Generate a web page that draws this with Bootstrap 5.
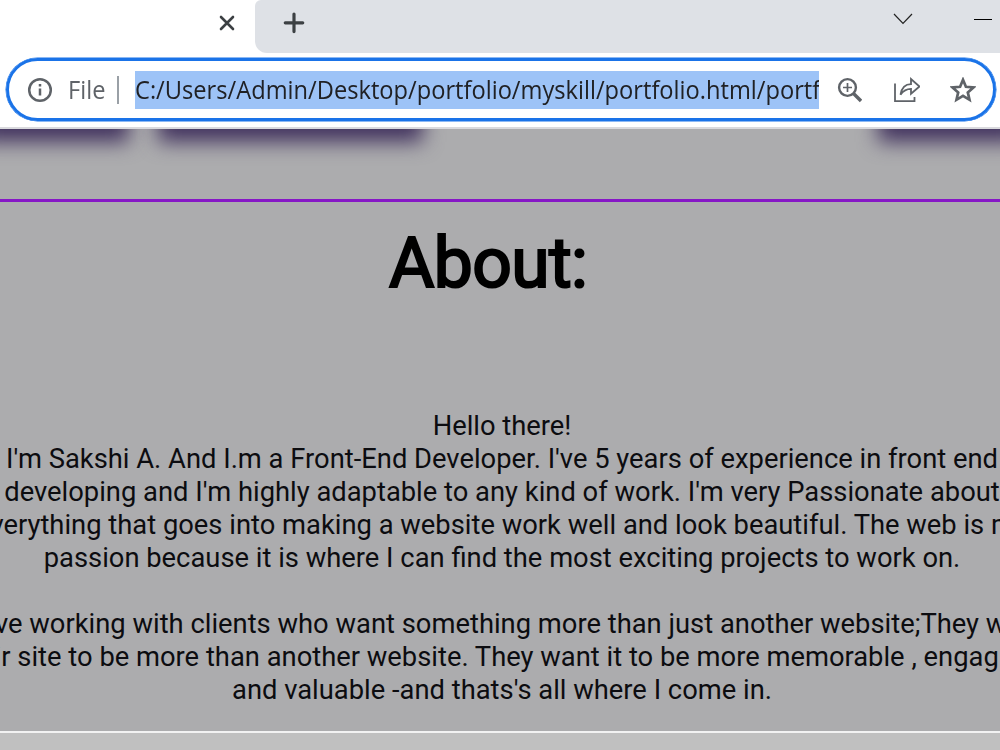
<!DOCTYPE html>
<html lang="en">
<head>
<meta charset="utf-8">
<meta name="viewport" content="width=device-width, initial-scale=1">
<title>Portfolio</title>
<link href="https://cdn.jsdelivr.net/npm/bootstrap@5.3.0/dist/css/bootstrap.min.css" rel="stylesheet">
<style>
body{background:#acacae;font-family:Roboto,sans-serif;color:#0c0c10;height:750px}
.tabstrip{height:53px;background:#fff}
.active-tab{width:255px;padding-right:20px}
.strip-rest{background:#dee1e6;border-radius:6px 0 0 12px;padding:0 8px 0 27px}
.window-buttons{gap:61px}
.toolbar{height:76px;background:#fff;padding:5px 4px 0 6px;border-bottom:2px solid #dadade}
.omnibox{height:63px;border:3px solid #1a73e8;box-shadow:0 0 0 .5px #1a73e8;border-radius:32px;padding:0 17.5px 0 18px}
.actions{gap:30px}
.addr{font:24.6px/38px "Open Sans",sans-serif;white-space:nowrap}
.scheme{color:#5f6368;width:36px;margin-left:15px}
.divider{width:2px;height:28px;background:#9aa0a6;margin:0 16px 0 13px}
.selected-url{background:#9dc3f7;color:#202124;width:684px;height:38px}
.squeeze{display:inline-block;transform:scaleX(.962);transform-origin:0 50%}
.shadow-area{height:70px}
.work-shadow{height:60px;margin-top:-47px;filter:blur(10px);background:#43345f}
.about{border-top:3px solid #8617c6;height:532px}
.about h2{font-size:69.500px;line-height:84px;font-weight:400;letter-spacing:-.6px;-webkit-text-stroke:2.200px #000;color:#000;margin:20px 0 0 389px}
.copy{margin-top:104px;width:1004px;font-size:27.35px;line-height:33px;white-space:nowrap}
.hang{padding-right:12px}
.next{border-top:2px solid #f2f2f2;background:#c0c0c0;height:20px}
</style>
</head>
<body class="overflow-hidden">
<header>
<div class="tabstrip d-flex">
<div class="active-tab d-flex align-items-center justify-content-end pb-2">
<svg width="16" height="16" viewBox="0 0 16 16" fill="none" stroke="#3c4043" stroke-width="2.600" stroke-linecap="round"><path d="M2 2l12 12M14 2L2 14"/></svg>
</div>
<div class="strip-rest flex-grow-1 d-flex">
<svg width="24" height="24" viewBox="0 0 24 24" class="mt-2 pt-1 overflow-visible" fill="none" stroke="#3c4043" stroke-width="3.800" stroke-linecap="round"><path d="M1.500 13h21M12 2.500v21"/></svg>
<div class="window-buttons d-flex ms-auto">
<svg width="20" height="40" viewBox="0 0 20 40" fill="none" stroke="#222" stroke-width="1.200"><path d="M1 14l9 9.500L19 14"/></svg>
<svg width="18" height="40" viewBox="0 0 18 40" fill="none" stroke="#000"><path d="M0 19.500h18"/></svg>
</div>
</div>
</div>
<div class="toolbar">
<div class="omnibox d-flex align-items-center">
<svg width="26" height="26" viewBox="0 0 26 26" fill="none" stroke="#5f6368" stroke-width="2.500"><circle cx="13" cy="13" r="10.800"/><path d="M13 11.500v7M13 7v2.600"/></svg>
<div class="addr scheme"><span class="squeeze">File</span></div>
<div class="divider"></div>
<div class="addr selected-url overflow-hidden"><span class="squeeze">C:/Users/Admin/Desktop/portfolio/myskill/portfolio.html/portf</span></div>
<div class="actions d-flex ms-auto">
<svg width="26" height="26" viewBox="0 0 26 26" fill="none" stroke="#5f6368" stroke-width="2.400"><circle cx="11.500" cy="10.500" r="8.400"/><path d="M17.500 16.500l7.500 7.500" stroke-width="3.400"/><path d="M7 10.500h9M11.500 6v9" stroke-width="1.700"/></svg>
<svg width="28" height="26" viewBox="0 0 28 26" fill="none" stroke="#5f6368" stroke-width="1.800"><path d="M3 6.500v17.700h19.500V20M8.500 17.700c1-6 4-10.500 10.500-10.500V2l8.500 7.500-8.500 7.300v-5c-5 0-8 2.200-10.500 5.900z"/></svg>
<svg width="26" height="26" viewBox="0 0 26 26" fill="none" stroke="#5f6368" stroke-width="2.700"><path d="M13 2.800l2.900 7 7.600.6-5.700 5 1.700 7.400L13 18.900l-6.500 3.900 1.700-7.400-5.700-5 7.600-.6z"/></svg>
</div>
</div>
</div>
</header>
<main>
<div class="shadow-area overflow-hidden d-flex">
<div class="work-shadow" style="width:149px;margin-left:-20px"></div>
<div class="work-shadow" style="width:265px;margin-left:29px"></div>
<div class="work-shadow ms-auto" style="width:142px;margin-right:-20px"></div>
</div>
<section class="about">
<h2>About:</h2>
<div class="copy">
<div class="d-flex justify-content-center">Hello there!</div>
<div class="d-flex justify-content-center">I'm Sakshi A. And I.m a Front-End Developer. I've 5 years of experience in front end</div>
<div class="d-flex justify-content-center">developing and I'm highly adaptable to any kind of work. I'm very Passionate about</div>
<div class="d-flex justify-content-center">everything that goes into making a website work well and look beautiful. The web is my</div>
<div class="d-flex justify-content-center">passion because it is where I can find the most exciting projects to work on.</div>
<br>
<div class="d-flex justify-content-center">I love working with clients who want something more than just another website;They want</div>
<div class="d-flex justify-content-center hang">their site to be more than another website. They want it to be more memorable , engaging</div>
<div class="d-flex justify-content-center">and valuable -and thats's all where I come in.</div>
</div>
</section>
<div class="next"></div>
</main>
<script src="https://cdn.jsdelivr.net/npm/bootstrap@5.3.0/dist/js/bootstrap.bundle.min.js"></script>
</body>
</html>
